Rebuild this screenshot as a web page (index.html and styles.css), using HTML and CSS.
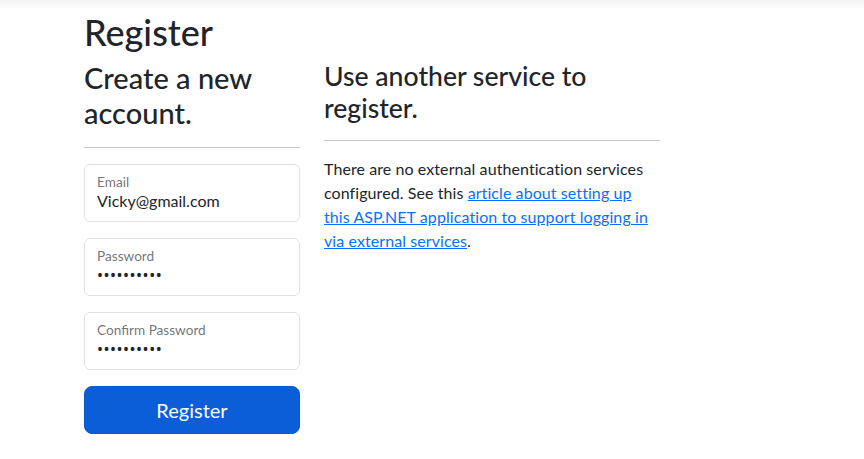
FILE: index.html
```html
<!DOCTYPE html>
<html lang="en">
<head>
<meta charset="utf-8">
<title>Register</title>
<link rel="stylesheet" href="styles.css">
</head>
<body>
<div class="topshade"></div>
<main class="container">
  <h1 class="title">Register</h1>
  <div class="row">
    <div class="col-left">
      <form class="form">
        <h2 class="subtitle">Create a new account.</h2>
        <hr class="rule">
        <div class="floating">
          <input class="field" type="email" value="Vicky@gmail.com">
          <label class="flabel">Email</label>
        </div>
        <div class="floating">
          <input class="field dots" type="password" value="Password12">
          <label class="flabel">Password</label>
        </div>
        <div class="floating">
          <input class="field dots" type="password" value="Password12">
          <label class="flabel">Confirm Password</label>
        </div>
        <button class="btn-primary" type="button">Register</button>
      </form>
    </div>
    <div class="col-right">
      <section>
        <h3 class="side-title">Use another service to register.</h3>
        <hr class="rule">
        <p class="text">There are no external authentication services configured. See this <a class="link" href="#">article about setting up this ASP.NET application to support logging in via external services</a>.</p>
      </section>
    </div>
  </div>
</main>
</body>
</html>
```

FILE: styles.css
```css
* { box-sizing: border-box; }
html, body { margin: 0; padding: 0; }
body {
  font-family: Lato, "Noto Sans", sans-serif;
  font-size: 16px;
  line-height: 1.5;
  color: #212529;
  background: #fff;
  height: 459px;
  overflow: hidden;
  position: relative;
}
.topshade {
  position: absolute;
  top: 0; left: 0; right: 0;
  height: 10px;
  background: linear-gradient(to bottom, rgba(0,0,0,0.045), rgba(0,0,0,0));
}
.container {
  width: 720px;
  margin: 0 auto;
  padding: 11px 12px 0;
}
.title {
  font-size: 36px;
  font-weight: 500;
  line-height: 42px;
  margin: 0 0 8px;
}
.row {
  display: flex;
  margin: 0 -12px;
}
.col-left { width: 240px; padding: 0 12px; }
.col-right { width: 360px; padding: 0 12px; }
.subtitle {
  font-size: 29px;
  font-weight: 500;
  line-height: 1.2;
  margin: 0 0 8px;
}
.side-title {
  font-size: 26.6px;
  font-weight: 500;
  line-height: 31.5px;
  margin: 0 0 8px;
}
.rule {
  border: 0;
  border-top: 1px solid #212529;
  opacity: .25;
  margin: 16px 0;
}
.floating {
  position: relative;
  margin-bottom: 16px;
}
.field {
  display: block;
  width: 100%;
  height: 58px;
  padding: 26px 12px 10px;
  font-family: inherit;
  font-size: 16px;
  line-height: 1.25;
  color: #212529;
  border: 1px solid #dee2e6;
  border-radius: 6px;
  background: #fff;
}
.dots {
  font-family: "Noto Sans", sans-serif;
  letter-spacing: 0.5px;
}
.flabel {
  position: absolute;
  top: 0; left: 0;
  padding: 16px 12px;
  border: 1px solid transparent;
  transform-origin: 0 0;
  transform: scale(.85) translateY(-8px) translateX(2.4px);
  color: rgba(33,37,41,.65);
  font-size: 16px;
  line-height: 1.5;
  pointer-events: none;
}
.btn-primary {
  display: block;
  width: 100%;
  height: 48px;
  padding: 8px 16px;
  font-family: inherit;
  font-size: 20px;
  line-height: 1.5;
  color: #fff;
  background: #0b5ed7;
  border: 1px solid #0a58ca;
  border-radius: 8px;
}
.text { margin: 0 0 16px; letter-spacing: 0.08px; }
.link { color: #0d6efd; text-decoration: underline; }
```
